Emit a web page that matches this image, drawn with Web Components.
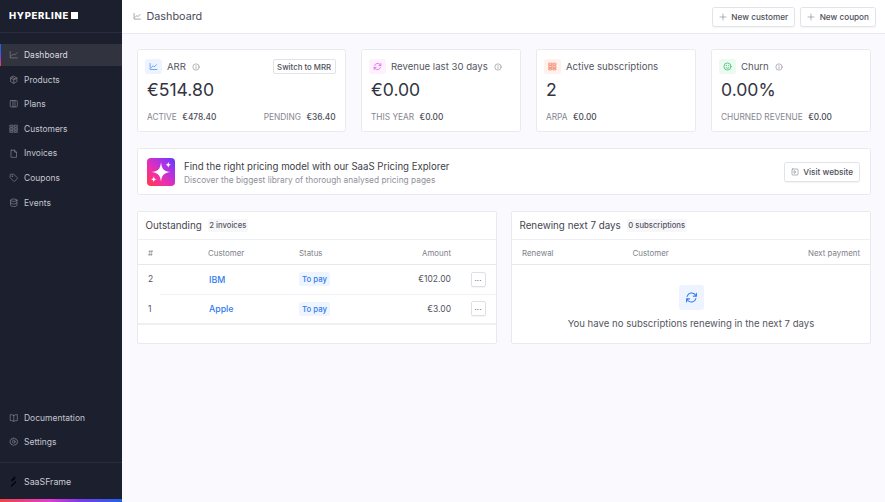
<!DOCTYPE html>
<html lang="en">
<head>
<meta charset="utf-8">
<title>Dashboard</title>
<style>
  html, body { margin: 0; height: 100%; }
  body { font-family: Inter, "Liberation Sans", sans-serif; color: #33343f; overflow: hidden; }
</style>
</head>
<body>
<app-shell>
  <side-bar slot="side">
    <nav-item icon="chart" active>Dashboard</nav-item>
    <nav-item icon="box">Products</nav-item>
    <nav-item icon="plans">Plans</nav-item>
    <nav-item icon="customers">Customers</nav-item>
    <nav-item icon="file">Invoices</nav-item>
    <nav-item icon="tag">Coupons</nav-item>
    <nav-item icon="db">Events</nav-item>
    <nav-item slot="bottom" icon="book">Documentation</nav-item>
    <nav-item slot="bottom" icon="gear">Settings</nav-item>
  </side-bar>
  <top-bar slot="top">
    <line-button slot="actions" icon="plus">New customer</line-button>
    <line-button slot="actions" icon="plus">New coupon</line-button>
  </top-bar>
  <stat-row>
    <stat-card label="ARR" icon="chart" tint="#eef4ff" tone="#2f7bf0" info value="€514.80">
      <line-button slot="extra" small>Switch to MRR</line-button>
      <stat-note label="ACTIVE" value="€478.40"></stat-note>
      <stat-note label="PENDING" value="€36.40"></stat-note>
    </stat-card>
    <stat-card label="Revenue last 30 days" icon="sync" tint="#fdf1fe" tone="#d946ef" info value="€0.00">
      <stat-note label="THIS YEAR" value="€0.00"></stat-note>
    </stat-card>
    <stat-card label="Active subscriptions" icon="customers" tint="#fff1ee" tone="#f0714f" value="2">
      <stat-note label="ARPA" value="€0.00"></stat-note>
    </stat-card>
    <stat-card label="Churn" icon="smile" tint="#ecfbf1" tone="#22b458" info value="0.00%">
      <stat-note label="CHURNED REVENUE" value="€0.00"></stat-note>
    </stat-card>
  </stat-row>
  <promo-banner>
    <span slot="title">Find the right pricing model with our SaaS Pricing Explorer</span>
    <span slot="sub">Discover the biggest library of thorough analysed pricing pages</span>
    <line-button slot="action" icon="play">Visit website</line-button>
  </promo-banner>
  <panel-row>
    <data-panel title="Outstanding" count="2 invoices">
      <invoice-table></invoice-table>
    </data-panel>
    <data-panel title="Renewing next 7 days" count="0 subscriptions">
      <renewal-empty></renewal-empty>
    </data-panel>
  </panel-row>
</app-shell>

<script>
// Stroke icons, all on a 24 box
const ICONS = {
  chart: '<path d="M3 4v16h18"/><path d="M6 15l5-5 3 3 6-6"/>',
  box: '<path d="M12 3l8 4.5v9L12 21l-8-4.5v-9z"/><path d="M4 7.5l8 4.5 8-4.5M12 12v9"/><path d="M8 5.2l8 4.6"/>',
  plans: '<rect x="3" y="4" width="18" height="16" rx="2"/><path d="M10 4v16M15 4v16"/>',
  customers: '<path d="M3 3h7v5H3zM14 3h7v5h-7zM3 10h7v5H3zM14 10h7v5h-7zM3 17h7v4H3zM14 17h7v4h-7z"/>',
  file: '<path d="M6 3h8l5 5v13H6a1 1 0 0 1-1-1V4a1 1 0 0 1 1-1z"/><path d="M14 3v5h5"/>',
  tag: '<path d="M3 4a1 1 0 0 1 1-1h8l9 9a1.5 1.5 0 0 1 0 2l-7 7a1.5 1.5 0 0 1-2 0l-9-9z"/><circle cx="8" cy="8" r="1"/>',
  db: '<ellipse cx="12" cy="5.5" rx="8" ry="3"/><path d="M4 5.5v13c0 1.7 3.6 3 8 3s8-1.3 8-3v-13"/><path d="M4 12c0 1.7 3.6 3 8 3s8-1.3 8-3"/>',
  book: '<path d="M12 6c-2-1.500-5-2-9-2v15c4 0 7 .5 9 2 2-1.500 5-2 9-2V4c-4 0-7 .5-9 2z"/><path d="M12 6v15"/>',
  gear: '<circle cx="12" cy="12" r="3.500"/><path d="M12 2.500l2.400 2.300 3.300-.5 1 3.200 3 1.500-.9 3.200.9 3.200-3 1.300-1 3.200-3.300-.4-2.400 2.300-2.400-2.300-3.300.4-1-3.200-3-1.300.9-3.200-.9-3.200 3-1.500 1-3.200 3.300.5z"/>',
  plus: '<path d="M12 3v18M3 12h18"/>',
  info: '<circle cx="12" cy="12" r="9.500"/><path d="M12 11v6M12 7.500v.5"/>',
  sync: '<path d="M4 10a8.500 8.500 0 0 1 15-3l1.500 2"/><path d="M21 4v5.500h-5.500"/><path d="M20 14a8.500 8.500 0 0 1-15 3l-1.500-2"/><path d="M3 20v-5.500h5.500"/>',
  smile: '<circle cx="12" cy="12" r="9.500"/><path d="M8 14.500c1 1.500 2.400 2.200 4 2.200s3-.7 4-2.200M9 9v1M15 9v1"/>',
  play: '<rect x="3" y="3" width="18" height="18" rx="2"/><path d="M10 8.500l5 3.500-5 3.500z"/>'
};

class SvgIcon extends HTMLElement {
  constructor() {
    super();
    this.attachShadow({ mode: "open" });
  }
  connectedCallback() {
    const size = this.getAttribute("size") || 12;
    const weight = this.getAttribute("weight") || 1.7;
    this.shadowRoot.innerHTML = `
      <style>
        :host { display: inline-flex; flex: none; width: ${size}px; height: ${size}px; }
        svg { width: 100%; height: 100%; fill: none; stroke: currentColor; stroke-width: ${weight}; stroke-linecap: round; stroke-linejoin: round; }
      </style>
      <svg viewBox="0 0 24 24">${ICONS[this.getAttribute("name")] || ""}</svg>`;
  }
}
customElements.define("svg-icon", SvgIcon);

class AppShell extends HTMLElement {
  constructor() {
    super();
    this.attachShadow({ mode: "open" }).innerHTML = `
      <style>
        :host { display: grid; grid-template-columns: 122px 1fr; height: 502px; width: 885px; background: #f9f9fe; }
        .main { display: flex; flex-direction: column; min-width: 0; }
        .body { display: flex; flex-direction: column; gap: 16px; padding: 15px 14px 0 15px; }
      </style>
      <slot name="side"></slot>
      <div class="main">
        <slot name="top"></slot>
        <div class="body"><slot></slot></div>
      </div>`;
  }
}
customElements.define("app-shell", AppShell);

class SideBar extends HTMLElement {
  constructor() {
    super();
    this.attachShadow({ mode: "open" }).innerHTML = `
      <style>
        :host { display: flex; flex-direction: column; height: 502px; background: #1c1f2e; position: relative; color: #c9cbd3; }
        .logo { height: 33px; box-sizing: border-box; border-bottom: 1px solid #2a2d3b; display: flex; align-items: center; padding: 0 0 1px 9px; gap: 2px; flex: none;
                color: #fff; font: 800 9.500px Inter, "Liberation Sans", sans-serif; letter-spacing: .7px; }
        .logo i { width: 7px; height: 7px; background: #fff; }
        .nav { display: flex; flex-direction: column; padding-top: 11px; gap: 2.600px; flex: 1; }
        .bottom { display: flex; flex-direction: column; gap: 2.300px; padding-bottom: 9px; }
        .org { border-top: 1px solid #2a2d3b; height: 37px; box-sizing: border-box; display: flex; align-items: center; gap: 7px; padding: 0 0 0 10px; font-size: 8.800px; flex: none; }
        .org svg { width: 7px; height: 11px; }
        .rainbow { height: 3px; flex: none; background: linear-gradient(90deg, #f5423f 0%, #e53ad0 40%, #7c3aed 65%, #1d63ea 100%); }
      </style>
      <div class="logo"><span>HYPERLINE</span><i></i></div>
      <div class="nav"><slot></slot></div>
      <div class="bottom"><slot name="bottom"></slot></div>
      <div class="org">
        <svg viewBox="0 0 8 13"><path d="M6 0L1.500 4v3L6 3.500zM7 5.500L1 11v2l6-5z" fill="#05060a"/></svg>
        <span>SaaSFrame</span>
      </div>
      <div class="rainbow"></div>`;
  }
}
customElements.define("side-bar", SideBar);

class NavItem extends HTMLElement {
  constructor() {
    super();
    this.attachShadow({ mode: "open" }).innerHTML = `
      <style>
        :host { display: flex; align-items: center; gap: 5.500px; height: 22px; padding-left: 9px; font-size: 8.450px; letter-spacing: .03px; color: #c4c6ce; position: relative; }
        :host([active]) { background: #31333f; color: #d9dbe0; }
        :host([active])::before { content: ""; position: absolute; left: 0; top: 0; bottom: 0; width: 1px; background: linear-gradient(180deg, #1d63ea 30%, #8a3ad8 60%, #f5423f); }
        svg-icon { color: #8b8d97; }
      </style>
      <svg-icon name="${this.getAttribute("icon")}" size="9.500" weight="1.600"></svg-icon>
      <slot></slot>`;
  }
}
customElements.define("nav-item", NavItem);

class TopBar extends HTMLElement {
  constructor() {
    super();
    this.attachShadow({ mode: "open" }).innerHTML = `
      <style>
        :host { display: flex; align-items: center; height: 34px; box-sizing: border-box; background: #fff; border-bottom: 1px solid #e8e9ee; padding: 0 9px 0 11px; flex: none; }
        h1 { font: 400 10.800px Inter, "Liberation Sans", sans-serif; color: #4a4b57; margin: 0 0 0 5px; flex: 1; }
        svg-icon { color: #6f7079; }
        .actions { display: flex; gap: 5px; }
      </style>
      <svg-icon name="chart" size="8.500"></svg-icon>
      <h1>Dashboard</h1>
      <div class="actions"><slot name="actions"></slot></div>`;
  }
}
customElements.define("top-bar", TopBar);

class LineButton extends HTMLElement {
  constructor() {
    super();
    const icon = this.getAttribute("icon");
    this.attachShadow({ mode: "open" }).innerHTML = `
      <style>
        :host { display: inline-flex; align-items: center; gap: 4.500px; height: 20px; box-sizing: border-box; padding: 0 6px; background: #fff; border: 1px solid #e2e3e9; border-radius: 2.500px;
                box-shadow: 0 1px 1px rgba(30,30,60,.05); font-size: 8.200px; font-weight: 500; color: #4e4f5a; white-space: nowrap; }
        :host([small]) { height: 15px; padding: 0 3.500px; font-size: 7.800px; border-radius: 2px; box-shadow: none; }
        svg-icon { color: #7b7c85; }
      </style>
      ${icon ? `<svg-icon name="${icon}" size="8"></svg-icon>` : ""}
      <slot></slot>`;
  }
}
customElements.define("line-button", LineButton);

class StatRow extends HTMLElement {
  constructor() {
    super();
    this.attachShadow({ mode: "open" }).innerHTML = `
      <style>:host { display: grid; grid-template-columns: 209px 160px 160px 1fr; gap: 15px; }</style>
      <slot></slot>`;
  }
}
customElements.define("stat-row", StatRow);

class StatCard extends HTMLElement {
  constructor() {
    super();
    const a = n => this.getAttribute(n);
    this.attachShadow({ mode: "open" }).innerHTML = `
      <style>
        :host { display: flex; flex-direction: column; height: 83px; box-sizing: border-box; background: #fff; border: 1px solid #e9eaf0; border-radius: 2.500px; padding: 9px 9.500px 0 9px; }
        .head { display: flex; align-items: center; height: 15px; gap: 5px; font-size: 9.600px; color: #55565f; white-space: nowrap; }
        .chip { width: 17px; height: 15px; margin-left: -2px; border-radius: 2.500px; display: flex; align-items: center; justify-content: center; background: ${a("tint")}; color: ${a("tone")}; }
        .info { color: #7f808a; margin-left: 1px; }
        .extra { margin-left: auto; display: flex; }
        .value { font-size: 17.600px; line-height: 22px; color: #33343f; margin-top: 5px; }
        .notes { display: flex; justify-content: space-between; margin-top: 11px; }
      </style>
      <div class="head">
        <span class="chip"><svg-icon name="${a("icon")}" size="9" weight="1.800"></svg-icon></span>
        <span>${a("label")}</span>
        ${this.hasAttribute("info") ? '<svg-icon class="info" name="info" size="8"></svg-icon>' : ""}
        <span class="extra"><slot name="extra"></slot></span>
      </div>
      <div class="value">${a("value")}</div>
      <div class="notes"><slot></slot></div>`;
  }
}
customElements.define("stat-card", StatCard);

class StatNote extends HTMLElement {
  constructor() {
    super();
    this.attachShadow({ mode: "open" }).innerHTML = `
      <style>
        :host { display: inline-flex; gap: 5.500px; font-size: 8.300px; white-space: nowrap; }
        .l { color: #85868f; }
        .v { color: #4b4c56; font-weight: 500; }
      </style>
      <span class="l">${this.getAttribute("label")}</span>
      <span class="v">${this.getAttribute("value")}</span>`;
  }
}
customElements.define("stat-note", StatNote);

class PromoBanner extends HTMLElement {
  constructor() {
    super();
    this.attachShadow({ mode: "open" }).innerHTML = `
      <style>
        :host { display: flex; align-items: center; height: 47px; box-sizing: border-box; background: #fff; border: 1px solid #e9eaf0; border-radius: 2.500px; padding: 0 10px 0 9px; gap: 9px; }
        .logo { width: 28px; height: 28px; border-radius: 4px; flex: none; background: linear-gradient(45deg, #ff3d3d 0%, #f22fa6 35%, #a033f0 75%, #5f3df5 100%); display: block; }
        .text { flex: 1; display: flex; flex-direction: column; gap: 3px; padding-top: 2px; }
        .t { font-size: 9.650px; color: #3d3e48; }
        .s { font-size: 8.300px; color: #8f909a; letter-spacing: .03px; }
      </style>
      <svg class="logo" viewBox="0 0 27 27">
        <path fill="#fff" d="M13.500 4c.7 6.500 2.800 8.800 9.500 9.500-6.700.7-8.800 3-9.500 9.500-.7-6.500-2.800-8.800-9.500-9.500 6.700-.7 8.800-3 9.500-9.500z"/>
        <path fill="#fff" d="M20.500 3.500c.3 1.900 1 2.600 2.900 2.900-1.900.3-2.600 1-2.900 2.900-.3-1.900-1-2.600-2.900-2.900 1.900-.3 2.600-1 2.900-2.900z"/>
        <path fill="#fff" d="M6.500 17.500c.3 1.900 1 2.600 2.900 2.900-1.900.3-2.600 1-2.900 2.900-.3-1.900-1-2.600-2.900-2.900 1.900-.3 2.600-1 2.900-2.900z"/>
      </svg>
      <div class="text">
        <div class="t"><slot name="title"></slot></div>
        <div class="s"><slot name="sub"></slot></div>
      </div>
      <slot name="action"></slot>`;
  }
}
customElements.define("promo-banner", PromoBanner);

class PanelRow extends HTMLElement {
  constructor() {
    super();
    this.attachShadow({ mode: "open" }).innerHTML = `
      <style>:host { display: grid; grid-template-columns: 359.500px 1fr; gap: 14.500px; }</style>
      <slot></slot>`;
  }
}
customElements.define("panel-row", PanelRow);

class DataPanel extends HTMLElement {
  constructor() {
    super();
    this.attachShadow({ mode: "open" }).innerHTML = `
      <style>
        :host { display: flex; flex-direction: column; height: 132.500px; box-sizing: border-box; background: #fff; border: 1px solid #e9eaf0; border-radius: 2px; overflow: hidden; }
        .head { display: flex; align-items: center; height: 28px; flex: none; box-sizing: border-box; padding: 0 7.500px; gap: 6px; border-bottom: 1px solid #eeeff3; }
        .t { font-size: 9.800px; color: #45464f; white-space: nowrap; }
        .c { font-size: 7.700px; font-weight: 500; color: #54555f; background: #f7f7fa; padding: 2px 1.500px; border-radius: 2px; white-space: nowrap; }
      </style>
      <div class="head">
        <span class="t">${this.getAttribute("title")}</span>
        <span class="c">${this.getAttribute("count")}</span>
      </div>
      <slot></slot>`;
  }
}
customElements.define("data-panel", DataPanel);

// Both tables share one look, so their header row is its own element
class HeadRow extends HTMLElement {
  constructor() {
    super();
    this.attachShadow({ mode: "open" }).innerHTML = `
      <style>
        :host { display: grid; grid-template-columns: var(--cols); align-items: center; height: 25px; flex: none; box-sizing: border-box; padding-top: 2px; border-bottom: 1px solid #e7e8ed; font-size: 7.900px; color: #7e7f89; }
      </style>
      <slot></slot>`;
  }
}
customElements.define("head-row", HeadRow);

class InvoiceRow extends HTMLElement {
  constructor() {
    super();
    const a = n => this.getAttribute(n);
    this.attachShadow({ mode: "open" }).innerHTML = `
      <style>
        :host { display: grid; grid-template-columns: var(--cols); align-items: center; height: 28.500px; box-sizing: border-box; font-size: 8.500px; color: #54555f; position: relative; }
        .num { padding-left: 10px; }
        .name { color: #2f7bf0; font-size: 8.800px; font-weight: 500; padding-left: 1px; }
        .pill { justify-self: start; color: #2f7bf0; background: #eff5ff; font-size: 7.800px; font-weight: 500; padding: 2px 3px; border-radius: 2.500px; }
        .amt { text-align: right; }
        .menu { justify-self: end; margin-right: 10px; width: 15px; height: 15px; box-sizing: border-box; border: 1px solid #dfe0e6; border-radius: 2px; display: flex; align-items: center; justify-content: center; font-size: 8px; line-height: 1; padding-bottom: 3px; color: #55565f; box-shadow: 0 1px 1px rgba(30,30,60,.05); }
      </style>
      <span class="num">${a("n")}</span>
      <span class="name">${a("name")}</span>
      <span><span class="pill">To pay</span></span>
      <span class="amt">${a("amount")}</span>
      <span class="menu">...</span>`;
  }
}
customElements.define("invoice-row", InvoiceRow);

class InvoiceTable extends HTMLElement {
  constructor() {
    super();
    this.attachShadow({ mode: "open" }).innerHTML = `
      <style>
        :host { display: flex; flex-direction: column; flex: 1; --cols: 70px 91px 77px 75px 1fr; }
        .num { padding-left: 10px; }
        .r { text-align: right; }
        hr { border: 0; border-top: 1px solid #f0f1f4; margin: 0 0 0 22px; }
        .end { border-bottom: 2px solid #eeeff3; }
      </style>
      <head-row><span class="num">#</span><span>Customer</span><span>Status</span><span class="r">Amount</span><span></span></head-row>
      <invoice-row n="2" name="IBM" amount="€102.00"></invoice-row>
      <hr>
      <div class="end"><invoice-row n="1" name="Apple" amount="€3.00"></invoice-row></div>`;
  }
}
customElements.define("invoice-table", InvoiceTable);

class RenewalEmpty extends HTMLElement {
  constructor() {
    super();
    this.attachShadow({ mode: "open" }).innerHTML = `
      <style>
        :host { display: flex; flex-direction: column; flex: 1; --cols: 120.500px 1fr auto; }
        head-row span:first-child { padding-left: 10px; }
        head-row span:last-child { padding-right: 10px; }
        .empty { flex: 1; display: flex; flex-direction: column; align-items: center; padding-top: 20px; gap: 8px; font-size: 9.600px; color: #55565f; }
        .chip { width: 25px; height: 25px; border-radius: 3px; background: #edf4ff; color: #2f7bf0; display: flex; align-items: center; justify-content: center; }
      </style>
      <head-row><span>Renewal</span><span>Customer</span><span>Next payment</span></head-row>
      <div class="empty">
        <span class="chip"><svg-icon name="sync" size="13" weight="2"></svg-icon></span>
        <span>You have no subscriptions renewing in the next 7 days</span>
      </div>`;
  }
}
customElements.define("renewal-empty", RenewalEmpty);
</script>
</body>
</html>
